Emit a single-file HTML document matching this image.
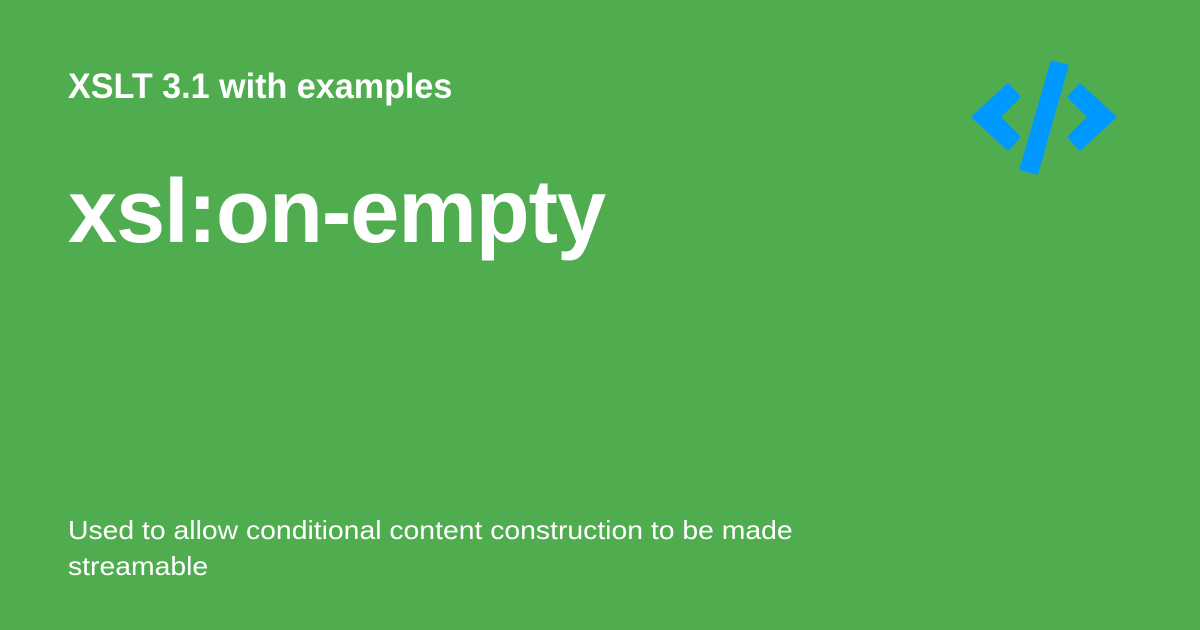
<!DOCTYPE html>
<html><head><style>
body{margin:0;width:1200px;height:630px;background:#4fad50;overflow:hidden;font-family:"Liberation Sans",sans-serif;color:#fff;position:relative}
.t{position:absolute;left:68px;white-space:nowrap;transform-origin:0 0}
</style></head><body>
<div class="t" style="top:67px;font-size:35px;font-weight:bold;transform:scaleX(0.975)">XSLT 3.1 with examples</div>
<div class="t" style="top:161px;font-size:90px;font-weight:bold;transform:scaleX(0.98);letter-spacing:-1px">xsl:on-empty</div>
<div class="t" style="top:512px;font-size:26px;line-height:36px;transform:scaleX(1.09)">Used to allow conditional content construction to be made<br>streamable</div>
<svg style="position:absolute;left:0;top:0" width="1200" height="630">
<g fill="#0099ff" stroke="#0099ff" stroke-width="3" stroke-linejoin="round">
<polygon points="973,117 1008,85 1019,97 999,117 1019,137 1008,149"/>
<polygon points="1115,117 1080,85 1069,97 1089,117 1069,137 1080,149"/>
<polygon points="1052,62 1067,66 1037,173 1021,169"/>
</g></svg>
</body></html>
